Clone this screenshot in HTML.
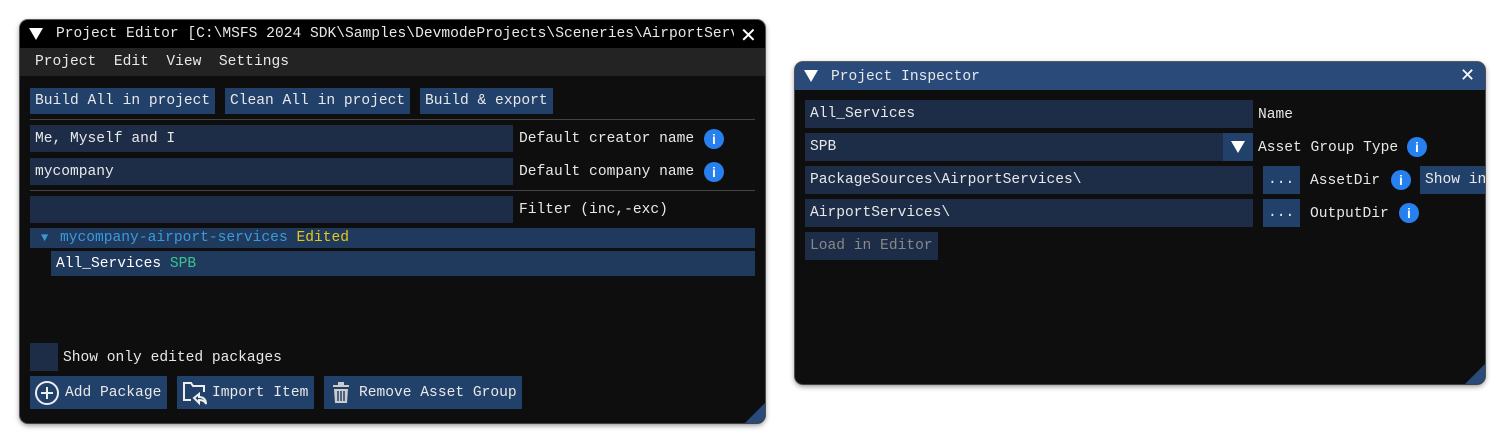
<!DOCTYPE html><html><head><style>
body{margin:0;width:1505px;height:444px;background:#fff;position:relative;overflow:hidden;font-family:"Liberation Mono",monospace;font-size:14.6px;color:#e8e8e8}
.a{position:absolute;box-sizing:border-box;white-space:nowrap}
.win{background:#0e0e0e;border-radius:8px;box-shadow:0 2px 6px rgba(0,0,0,.5),0 0 0 1px #666;overflow:hidden}
.btn{background:#22416a;line-height:27px;padding-left:5px}
.inp{background:#1d2d48;padding-left:5px}
.info{width:20px;height:20px;border-radius:50%;background:#2680f0;color:#fff;font:bold 14px "Liberation Sans",sans-serif;text-align:center;line-height:20px}
.tri{width:0;height:0;border-left:7px solid transparent;border-right:7px solid transparent;border-top:12px solid #fff}
</style></head><body>
<div class="a win" style="left:20px;top:20px;width:745px;height:403px">
 <div class="a" style="left:0;top:0;width:745px;height:28px;background:#000"></div>
 <div class="a tri" style="left:9px;top:8px"></div>
 <div class="a" style="left:36px;top:6px;width:678px;overflow:hidden">Project Editor [C:\MSFS 2024 SDK\Samples\DevmodeProjects\Sceneries\AirportServ</div>
 <div class="a" style="left:720px;top:3px;font:20px 'DejaVu Sans',sans-serif;color:#fff">✕</div>
 <div class="a" style="left:0;top:28px;width:745px;height:28px;background:#232323"></div>
 <div class="a" style="left:15px;top:34px">Project&nbsp;&nbsp;Edit&nbsp;&nbsp;View&nbsp;&nbsp;Settings</div>
 <div class="a btn" style="left:10px;top:68px;width:185px;height:26px">Build All in project</div>
 <div class="a btn" style="left:205px;top:68px;width:185px;height:26px">Clean All in project</div>
 <div class="a btn" style="left:400px;top:68px;width:133px;height:26px">Build &amp; export</div>
 <div class="a" style="left:10px;top:99px;width:725px;height:1px;background:#444"></div>
 <div class="a inp" style="left:10px;top:105px;width:483px;height:27px;line-height:28px">Me, Myself and I</div>
 <div class="a" style="left:499px;top:111px">Default creator name</div>
 <div class="a info" style="left:684px;top:109px">i</div>
 <div class="a inp" style="left:10px;top:138px;width:483px;height:27px;line-height:28px">mycompany</div>
 <div class="a" style="left:499px;top:144px">Default company name</div>
 <div class="a info" style="left:684px;top:142px">i</div>
 <div class="a" style="left:10px;top:170px;width:725px;height:1px;background:#444"></div>
 <div class="a inp" style="left:10px;top:176px;width:483px;height:27px"></div>
 <div class="a" style="left:499px;top:182px">Filter (inc,-exc)</div>
 <div class="a" style="left:10px;top:208px;width:725px;height:20px;background:#203a5e"></div>
 <div class="a" style="left:21px;top:211px;font-size:12px;color:#3a9ad9">▼</div>
 <div class="a" style="left:40px;top:210px;color:#3a9ad9">mycompany-airport-services <span style="color:#e8c61a">Edited</span></div>
 <div class="a" style="left:31px;top:231px;width:704px;height:25px;background:#203a5e"></div>
 <div class="a" style="left:36px;top:236px;color:#fff">All_Services <span style="color:#3cc48e">SPB</span></div>
 <div class="a" style="left:10px;top:323px;width:28px;height:28px;background:#1d2d48"></div>
 <div class="a" style="left:43px;top:330px">Show only edited packages</div>
 <div class="a btn" style="left:10px;top:356px;width:137px;height:33px;line-height:34px;padding-left:35px">Add Package</div>
 <svg class="a" style="left:14px;top:360px" width="26" height="26"><circle cx="13" cy="13" r="11" fill="none" stroke="#eee" stroke-width="2"/><path d="M13 7v12M7 13h12" stroke="#eee" stroke-width="2"/></svg>
 <div class="a btn" style="left:157px;top:356px;width:137px;height:33px;line-height:34px;padding-left:35px">Import Item</div>
 <svg class="a" style="left:162px;top:361px" width="28" height="26"><path d="M9 19H2V2h7l2 3h11v6" fill="none" stroke="#eee" stroke-width="2"/><path d="M12 17l5-4v3c4 0 7 2 7 7c-1-3-4-4-7-4v3z" fill="none" stroke="#eee" stroke-width="2"/></svg>
 <div class="a btn" style="left:304px;top:356px;width:198px;height:33px;line-height:34px;padding-left:35px">Remove Asset Group</div>
 <svg class="a" style="left:311px;top:362px" width="20" height="22"><rect x="2" y="3" width="16" height="2" fill="#ccc"/><rect x="7" y="0" width="6" height="3" fill="#ccc"/><path d="M3 7h14l-1 14H4z" fill="#ccc"/><path d="M7 9v10M10 9v10M13 9v10" stroke="#22416a" stroke-width="1.5"/></svg>
 <svg class="a" style="left:725px;top:383px" width="20" height="20"><path d="M20 0V20H0z" fill="#2a4a7a"/></svg>
</div>
<div class="a win" style="left:795px;top:62px;width:690px;height:322px">
 <div class="a" style="left:0;top:0;width:690px;height:28px;background:#2a4a7a"></div>
 <div class="a tri" style="left:9px;top:8px"></div>
 <div class="a" style="left:36px;top:7px">Project Inspector</div>
 <div class="a" style="left:665px;top:3px;font:18px 'DejaVu Sans',sans-serif;color:#fff">✕</div>
 <div class="a inp" style="left:10px;top:38px;width:448px;height:28px;line-height:29px">All_Services</div>
 <div class="a" style="left:463px;top:45px">Name</div>
 <div class="a inp" style="left:10px;top:71px;width:448px;height:28px;line-height:29px">SPB</div>
 <div class="a" style="left:428px;top:71px;width:30px;height:28px;background:#22416a"></div>
 <div class="a tri" style="left:436px;top:79px"></div>
 <div class="a" style="left:463px;top:78px">Asset Group Type</div>
 <div class="a info" style="left:612px;top:75px">i</div>
 <div class="a inp" style="left:10px;top:104px;width:448px;height:28px;line-height:29px">PackageSources\AirportServices\</div>
 <div class="a btn" style="left:468px;top:104px;width:37px;height:28px;line-height:29px;padding-left:5px">...</div>
 <div class="a" style="left:515px;top:111px">AssetDir</div>
 <div class="a info" style="left:596px;top:108px">i</div>
 <div class="a btn" style="left:625px;top:104px;width:66px;height:28px;line-height:29px">Show in</div>
 <div class="a inp" style="left:10px;top:137px;width:448px;height:28px;line-height:29px">AirportServices\</div>
 <div class="a btn" style="left:468px;top:137px;width:37px;height:28px;line-height:29px;padding-left:5px">...</div>
 <div class="a" style="left:515px;top:144px">OutputDir</div>
 <div class="a info" style="left:604px;top:141px">i</div>
 <div class="a inp" style="left:10px;top:170px;width:133px;height:28px;line-height:29px;color:#888">Load in Editor</div>
 <svg class="a" style="left:670px;top:302px" width="20" height="20"><path d="M20 0V20H0z" fill="#2a4a7a"/></svg>
</div>
</body></html>
